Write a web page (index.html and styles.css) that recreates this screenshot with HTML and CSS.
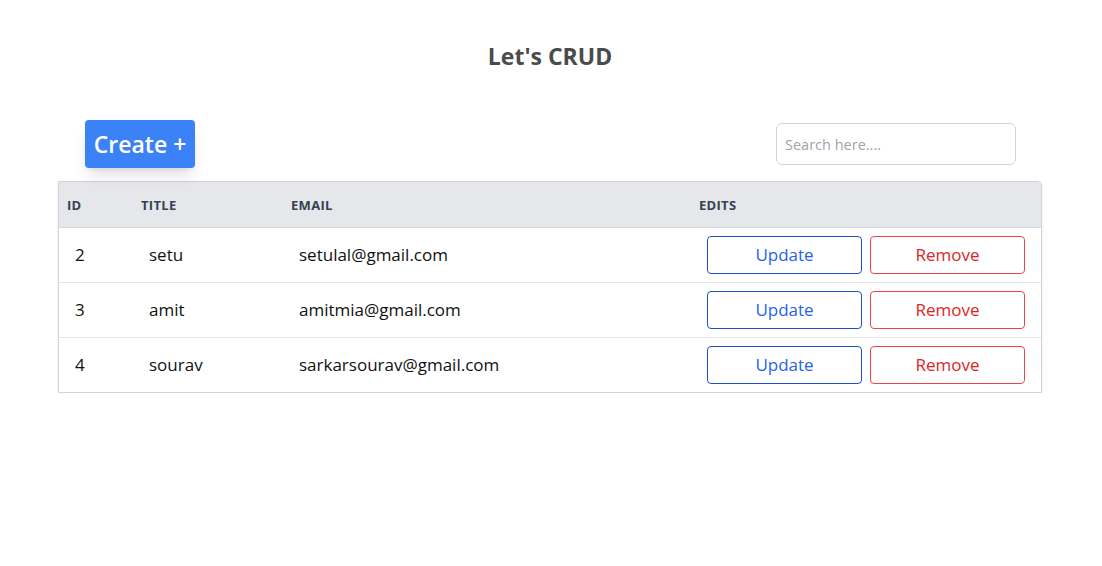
FILE: index.html
```html
<!DOCTYPE html>
<html>
<head>
<meta charset="utf-8">
<link rel="stylesheet" href="styles.css">
</head>
<body>
<main class="page">
  <h1 class="title">Let's CRUD</h1>
  <div class="toolbar">
    <button class="create">Create +</button>
    <input class="search" type="text" placeholder="Search here...." autofocus>
  </div>
  <div class="table-wrap">
    <table class="grid">
      <colgroup>
        <col class="c-id"><col class="c-title"><col class="c-email"><col class="c-edits">
      </colgroup>
      <thead>
        <tr><th>ID</th><th>TITLE</th><th>EMAIL</th><th>EDITS</th></tr>
      </thead>
      <tbody>
        <tr><td>2</td><td>setu</td><td>setulal@gmail.com</td><td><div class="actions"><button class="btn upd">Update</button><button class="btn rem">Remove</button></div></td></tr>
        <tr><td>3</td><td>amit</td><td>amitmia@gmail.com</td><td><div class="actions"><button class="btn upd">Update</button><button class="btn rem">Remove</button></div></td></tr>
        <tr><td>4</td><td>sourav</td><td>sarkarsourav@gmail.com</td><td><div class="actions"><button class="btn upd">Update</button><button class="btn rem">Remove</button></div></td></tr>
      </tbody>
    </table>
  </div>
</main>
</body>
</html>
```
FILE: styles.css
```css
* { box-sizing: border-box; }
body {
  margin: 0;
  background: #fff;
  font-family: "Open Sans", "Noto Sans", sans-serif;
  color: #111;
}
.page {
  padding: 39px 60px 0 58px;
}
.title {
  margin: 0;
  text-align: center;
  font-size: 23px;
  line-height: 34px;
  font-weight: 700;
  color: #4b4b4b;
}
.toolbar {
  display: flex;
  justify-content: space-between;
  align-items: center;
  margin-top: 47px;
  padding: 0 26px 0 27px;
  height: 48px;
}
.create {
  width: 110px;
  height: 48px;
  border: none;
  border-radius: 4px;
  background: #3b82f6;
  color: #fff;
  font-family: inherit;
  font-size: 23px;
  font-weight: 600;
  padding: 0;
  box-shadow: 0 10px 15px -3px rgba(0,0,0,0.12), 0 4px 6px -4px rgba(0,0,0,0.1);
}
.search {
  width: 240px;
  height: 42px;
  border: 1px solid #d1d5db;
  border-radius: 6px;
  padding: 0 8px;
  font-family: inherit;
  font-size: 14.5px;
  color: #111;
  outline: none;
  caret-color: #000;
}
.search::placeholder { color: #9ca3af; }
.table-wrap {
  margin-top: 13px;
  width: 984px;
  border: 1px solid #d1d5db;
  border-top-right-radius: 4px;
  overflow: hidden;
  box-shadow: 0 1px 3px rgba(0,0,0,0.08);
}
.grid {
  width: 100%;
  border-collapse: collapse;
  table-layout: fixed;
}
.c-id { width: 74px; }
.c-title { width: 150px; }
.c-email { width: 408px; }
.c-edits { width: 350px; }
thead tr { background: #e5e7eb; }
th {
  height: 45px;
  text-align: left;
  padding: 1px 0 0 8px;
  font-size: 13px;
  font-weight: 700;
  color: #374151;
  letter-spacing: 0.3px;
  border-bottom: 1px solid #d1d5db;
}
td {
  height: 55px;
  padding: 0 0 0 16px;
  font-size: 17px;
  color: #111;
  border-bottom: 1px solid #e5e7eb;
}
tbody tr:last-child td { border-bottom: none; }
.actions {
  display: flex;
  gap: 8px;
  padding-right: 16px;
}
.btn {
  flex: 1;
  height: 38px;
  background: #fff;
  border-radius: 4px;
  font-family: inherit;
  font-size: 17px;
  padding: 0;
}
.upd { border: 1px solid #1d4ed8; color: #2563eb; }
.rem { border: 1px solid #ef4444; color: #dc2626; }
```
